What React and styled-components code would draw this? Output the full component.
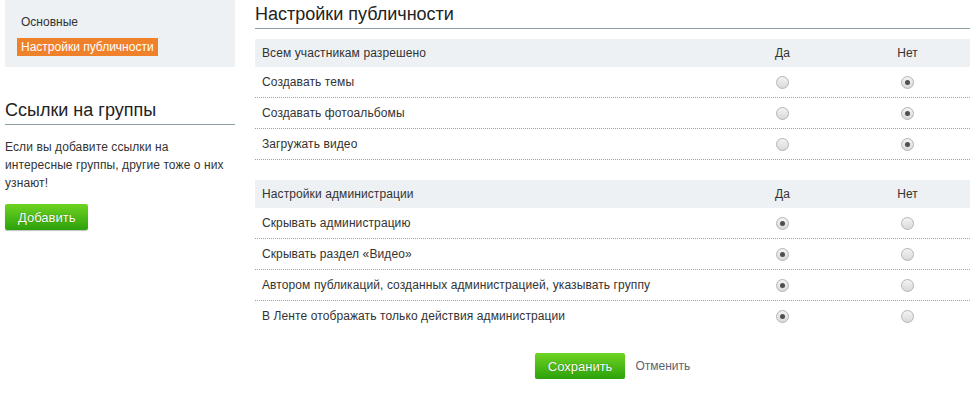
import React from 'react'
import styled, { createGlobalStyle } from 'styled-components'

const Global = createGlobalStyle`
  body {
    margin: 0;
    background: #fff;
    font-family: "Liberation Sans", Arial, sans-serif;
    font-size: 12px;
    color: #333;
  }
`

const Page = styled.div`
  display: flex;
  gap: 20px;
  padding-left: 5px;
  width: 965px;
`

const Sidebar = styled.aside`
  width: 230px;
  flex-shrink: 0;
`

const Menu = styled.ul`
  list-style: none;
  margin: 0;
  padding: 13px 12px 11px;
  background: #edf1f3;
  display: flex;
  flex-direction: column;
  align-items: flex-start;
  gap: 7px;
`

const MenuItem = styled.li`
  height: 18px;
  line-height: 18px;
  padding: 0 4px;
  font-size: 12px;
  color: ${p => (p.$active ? '#fff' : '#333')};
  background: ${p => (p.$active ? '#ef812b' : 'transparent')};
`

const SideTitle = styled.h2`
  margin: 31px 0 0;
  font-weight: normal;
  font-size: 18px;
  line-height: 24px;
  padding-bottom: 2px;
  border-bottom: 1px solid #8f9da5;
  color: #222;
`

const SideText = styled.p`
  margin: 13px 0 0;
  line-height: 18px;
  font-size: 12px;
  letter-spacing: 0.1px;
`

const GreenButton = styled.button`
  height: 26px;
  padding: 0 ${p => p.$pad || 13}px;
  border: none;
  border-radius: 2px;
  background: linear-gradient(#6fd422, #2ca10b);
  box-shadow: 0 1px 1px rgba(0, 0, 0, 0.25);
  color: #fff;
  font-family: "Liberation Sans", Arial, sans-serif;
  font-size: 13px;
  text-shadow: 0 0 1px rgba(0, 60, 0, 0.6);
  cursor: pointer;
`

const SideButton = styled(GreenButton)`
  margin-top: 12px;
`

const Main = styled.main`
  width: 715px;
`

const Title = styled.h1`
  margin: 2px 0 0;
  font-weight: normal;
  font-size: 18px;
  line-height: 24px;
  padding-bottom: 2px;
  border-bottom: 1px solid #8f9da5;
  color: #222;
`

const Table = styled.div`
  margin-top: ${p => p.$top}px;
`

const Row = styled.div`
  display: grid;
  grid-template-columns: 1fr 125px 125px;
  align-items: center;
  height: ${p => (p.$head ? 27 : 30)}px;
  padding-left: 7px;
  letter-spacing: 0.1px;
  background: ${p => (p.$head ? '#edf1f3' : 'transparent')};
  border-bottom: ${p => (p.$line ? '1px dotted #a0a0a0' : '1px solid transparent')};
`

const Cell = styled.div`
  display: flex;
  justify-content: center;
  align-items: center;
`

const Radio = styled.span`
  width: 11px;
  height: 11px;
  border-radius: 50%;
  border: 1px solid #b4b4b4;
  background: linear-gradient(#f3f3f3, #d9d9d9);
  display: flex;
  align-items: center;
  justify-content: center;
  &::after {
    content: '';
    width: 5px;
    height: 5px;
    border-radius: 50%;
    background: ${p => (p.$on ? '#4f4f4f' : 'transparent')};
  }
`

const Actions = styled.div`
  display: flex;
  justify-content: center;
  align-items: center;
  gap: 10px;
  margin-top: 21px;
`

const Cancel = styled.a`
  color: #5c6470;
  font-size: 12px;
  cursor: pointer;
`

const members = [
  ['Создавать темы', false],
  ['Создавать фотоальбомы', false],
  ['Загружать видео', false],
]

const admins = [
  ['Скрывать администрацию', true],
  ['Скрывать раздел «Видео»', true],
  ['Автором публикаций, созданных администрацией, указывать группу', true],
  ['В Ленте отображать только действия администрации', true],
]

const Settings = ({ title, rows, top, lastLine }) => (
  <Table $top={top}>
    <Row $head>
      <div>{title}</div>
      <Cell>Да</Cell>
      <Cell>Нет</Cell>
    </Row>
    {rows.map(([label, yes], i) => (
      <Row key={label} $line={lastLine || i < rows.length - 1}>
        <div>{label}</div>
        <Cell><Radio $on={yes} /></Cell>
        <Cell><Radio $on={!yes} /></Cell>
      </Row>
    ))}
  </Table>
)

export default function App() {
  return (
    <>
      <Global />
      <Page>
        <Sidebar>
          <Menu>
            <MenuItem>Основные</MenuItem>
            <MenuItem $active>Настройки публичности</MenuItem>
          </Menu>
          <SideTitle>Ссылки на группы</SideTitle>
          <SideText>Если вы добавите ссылки на интересные группы, другие тоже о них узнают!</SideText>
          <SideButton>Добавить</SideButton>
        </Sidebar>
        <Main>
          <Title>Настройки публичности</Title>
          <Settings title="Всем участникам разрешено" rows={members} top={10} lastLine />
          <Settings title="Настройки администрации" rows={admins} top={20} />
          <Actions>
            <GreenButton $pad={13}>Сохранить</GreenButton>
            <Cancel>Отменить</Cancel>
          </Actions>
        </Main>
      </Page>
    </>
  )
}
